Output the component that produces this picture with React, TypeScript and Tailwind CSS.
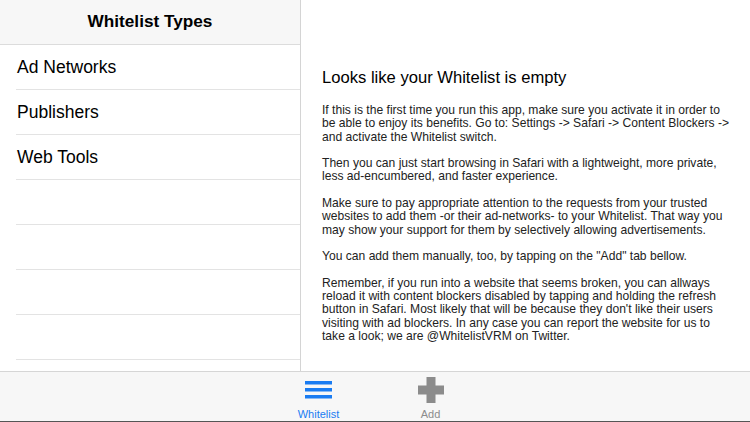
const rows = ['Ad Networks', 'Publishers', 'Web Tools', '', '', '', '']

const paragraphs = [
  'If this is the first time you run this app, make sure you activate it in order to be able to enjoy its benefits. Go to: Settings -> Safari -> Content Blockers -> and activate the Whitelist switch.',
  'Then you can just start browsing in Safari with a lightweight, more private, less ad-encumbered, and faster experience.',
  'Make sure to pay appropriate attention to the requests from your trusted websites to add them -or their ad-networks- to your Whitelist. That way you may show your support for them by selectively allowing advertisements.',
  'You can add them manually, too, by tapping on the "Add" tab bellow.',
  "Remember, if you run into a website that seems broken, you can allways reload it with content blockers disabled by tapping and holding the refresh button in Safari. Most likely that will be because they don't like their users visiting with ad blockers. In any case you can report the website for us to take a look; we are @WhitelistVRM on Twitter.",
]

function ListIcon() {
  return (
    <svg width="27" height="18" viewBox="0 0 27 18" fill="#1a7cf2">
      <rect x="0" y="0" width="27" height="3.5" />
      <rect x="0" y="7" width="27" height="3.5" />
      <rect x="0" y="14" width="27" height="3.5" />
    </svg>
  )
}

function PlusIcon() {
  return (
    <svg width="26" height="26" viewBox="0 0 26 26" fill="#8c8c8c">
      <rect x="8.5" y="0" width="9" height="26" />
      <rect x="0" y="8.5" width="26" height="9" />
    </svg>
  )
}

export default function App() {
  return (
    <div
      className="flex h-[422px] w-[750px] flex-col overflow-hidden bg-white"
      style={{ fontFamily: '"Liberation Sans", Arial, sans-serif' }}
    >
      <div className="flex min-h-0 flex-1">
        <div className="flex w-[301px] shrink-0 flex-col border-r border-[#d4d4d4]">
          <div className="flex h-[45px] shrink-0 items-center justify-center border-b border-[#dcdcdc] bg-[#f7f7f7] text-[17.2px] font-bold text-black">
            Whitelist Types
          </div>
          {rows.map((r, i) => (
            <div key={i} className="ml-4 flex h-[45px] shrink-0 items-center border-b border-[#e3e3e3] text-[17.5px] text-black">
              <span className="pl-px">{r}</span>
            </div>
          ))}
        </div>
        <div className="flex-1 pl-[21px] pr-[15px] pt-[67px] text-[#222]">
          <h1 className="text-[16.6px] leading-[22px] text-black">Looks like your Whitelist is empty</h1>
          <div className="mt-[15px] flex flex-col gap-[13.3px] text-[12.1px] leading-[13.3px]">
            {paragraphs.map((p, i) => (
              <p key={i}>{p}</p>
            ))}
          </div>
        </div>
      </div>
      <div className="flex h-[51px] shrink-0 border-t border-[#d6d6d6] border-b border-b-[#555] bg-[#f7f7f7]">
        <div className="w-[280px]" />
        <div className="flex w-[77px] flex-col items-center pt-[9px]">
          <ListIcon />
          <span className="mt-[9px] text-[11px] leading-[13px] text-[#1a7cf2]">Whitelist</span>
        </div>
        <div className="ml-[35px] flex w-[77px] flex-col items-center pt-[5px]">
          <PlusIcon />
          <span className="mt-[5px] text-[11px] leading-[13px] text-[#8c8c8c]">Add</span>
        </div>
      </div>
    </div>
  )
}
